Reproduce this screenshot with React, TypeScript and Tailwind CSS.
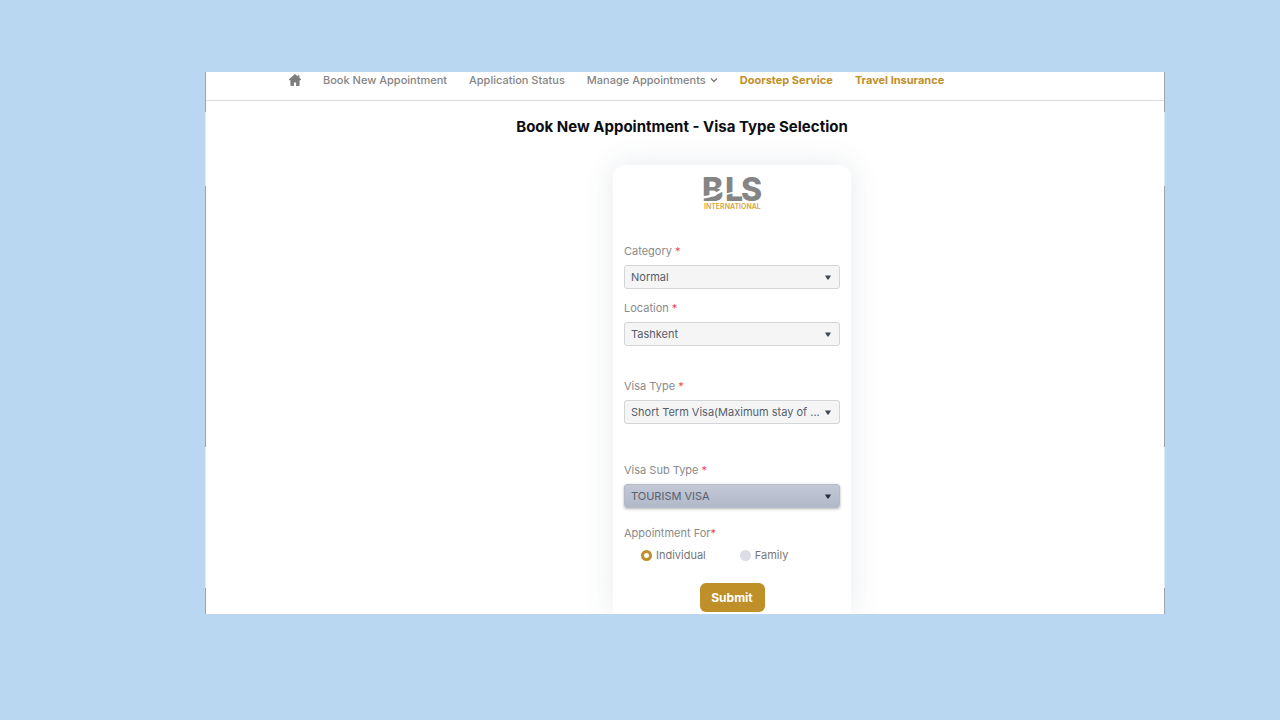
import { ReactNode } from "react";

function Edge() {
  return (
    <div aria-hidden="true" className="flex w-px shrink-0 flex-col bg-[#dcebf8]">
      <div className="h-10 bg-[#9da5ab]" />
      <div className="h-[74px]" />
      <div className="h-[261px] bg-[#9da5ab]" />
      <div className="h-[141px]" />
      <div className="grow bg-[#9da5ab]" />
    </div>
  );
}

function Logo() {
  return (
    <svg className="mx-auto block overflow-visible" width="60" height="34" viewBox="0 0 60 34" role="img" aria-label="BLS International">
      <g fontFamily="Inter, 'Liberation Sans', sans-serif" fontWeight="800" fontSize="32" fill="#858585">
        <text x="0" y="25">B</text>
        <text x="23" y="25">L</text>
        <text x="39" y="25">S</text>
      </g>
      <path d="M0 21.5C8 21 15 18.5 23 12" stroke="#fff" strokeWidth="2.4" fill="none" />
      <path d="M23 18.5L39 14.5" stroke="#fff" strokeWidth="1.6" fill="none" />
      <text x="2" y="33" fontFamily="Inter, 'Liberation Sans', sans-serif" fontSize="7" fontWeight="600" fill="#d9a43c">
        INTERNATIONAL
      </text>
    </svg>
  );
}

function Field({ id, label, value, active = false }: { id: string; label: string; value: string; active?: boolean }) {
  return (
    <div>
      <label htmlFor={id} className="block text-[11px] leading-4 text-[#8a8a8a]">
        {label} <span className="text-[#f0455a]">*</span>
      </label>
      <div className="relative mt-1.5">
        <select
          id={id}
          className={
            active
              ? "block h-6 w-full appearance-none rounded-[3px] border border-[#b4bac6] bg-linear-to-b from-[#c2c8d6] to-[#b1b8c8] pr-5 pl-1.5 text-[11px] text-[#59606d] shadow-[0_1px_3px_rgba(0,0,0,0.3)]"
              : "block h-6 w-full appearance-none rounded-[3px] border border-[#d3d5d8] bg-[#f5f5f6] pr-5 pl-1.5 text-[11px] text-[#555d6b]"
          }
        >
          <option>{value}</option>
        </select>
        <svg className="pointer-events-none absolute top-2.5 right-[9px]" width="6" height="5" viewBox="0 0 6 5" aria-hidden="true">
          <path d="M0 .5H6L3.6 4.6H2.4Z" fill={active ? "#262c38" : "#414955"} />
        </svg>
      </div>
    </div>
  );
}

function Choice({ label, checked = false }: { label: string; checked?: boolean }) {
  return (
    <label className="flex items-center gap-1 text-[11px] leading-4 text-[#777]">
      <input
        type="radio"
        name="appointmentFor"
        defaultChecked={checked}
        className="size-[11px] appearance-none rounded-full bg-[#dcdce4] checked:border-[3px] checked:border-[#bf8f2a] checked:bg-white"
      />
      {label}
    </label>
  );
}

function NavLink({ children, gold = false }: { children: ReactNode; gold?: boolean }) {
  return (
    <a href="#" className={gold ? "font-bold text-[#bf8f2a]" : "flex items-center gap-1 font-medium text-[#858585]"}>
      {children}
    </a>
  );
}

export default function App() {
  return (
    <div className="min-h-screen bg-[#b9d7f1] pt-[72px] pr-[115px] pb-[106px] pl-[205px] font-['Inter','Liberation_Sans',sans-serif]">
      <div className="flex">
        <Edge />
        <div className="min-w-0 flex-1 overflow-hidden bg-white">
          <nav className="flex h-[29px] items-start gap-[22px] border-b border-[#dfdfdf] pl-[83px] text-[11px] leading-4 whitespace-nowrap">
            <a href="#" aria-label="Home" className="pt-0.5">
              <svg width="12" height="12" viewBox="0 0 12 12" fill="#7d7d7d">
                <path d="M6 0L0 5.2Q-.2 6.4 1.4 6.3V11Q1.4 12 2.4 12H4.9V8.6H7.1V12H9.6Q10.6 12 10.6 11V6.3Q12.2 6.4 12 5.2L10.4 3.8V1.2H8.9V2.5Z" />
              </svg>
            </a>
            <NavLink>Book New Appointment</NavLink>
            <NavLink>Application Status</NavLink>
            <NavLink>
              Manage Appointments
              <svg width="8" height="6" viewBox="0 0 8 6" fill="none" stroke="#777" strokeWidth="1.3" aria-hidden="true">
                <path d="M1 1.5L4 4.5L7 1.5" />
              </svg>
            </NavLink>
            <NavLink gold>Doorstep Service</NavLink>
            <NavLink gold>Travel Insurance</NavLink>
          </nav>
          <h1 className="mt-4 pr-1.5 text-center text-[15px] leading-5 font-bold text-[#0d0d12]">
            Book New Appointment - Visa Type Selection
          </h1>
          <div className="mt-7 flex justify-center pl-[94px]">
            <form className="w-[238px] rounded-t-xl bg-white px-[11px] pt-[11px] pb-0.5 shadow-[0_0_32px_rgba(60,80,110,0.12)]">
              <Logo />
              <div className="mt-[33px]">
                <Field id="category" label="Category" value="Normal" />
              </div>
              <div className="mt-[11px]">
                <Field id="location" label="Location" value="Tashkent" />
              </div>
              <div className="mt-8">
                <Field id="visa-type" label="Visa Type" value="Short Term Visa(Maximum stay of ..." />
              </div>
              <div className="mt-[38px]">
                <Field id="visa-sub-type" label="Visa Sub Type" value="TOURISM VISA" active />
              </div>
              <fieldset className="mt-[17px]">
                <legend className="text-[11px] leading-4 text-[#8a8a8a]">
                  Appointment For<span className="text-[#f0455a]">*</span>
                </legend>
                <div className="mt-1.5 flex gap-[34px] pl-[17px]">
                  <Choice label="Individual" checked />
                  <Choice label="Family" />
                </div>
              </fieldset>
              <button type="button" className="mx-auto mt-5 block h-[29px] w-[65px] rounded-md bg-[#bf8f2a] text-[12px] font-bold text-white">
                Submit
              </button>
            </form>
          </div>
        </div>
        <Edge />
      </div>
    </div>
  );
}
